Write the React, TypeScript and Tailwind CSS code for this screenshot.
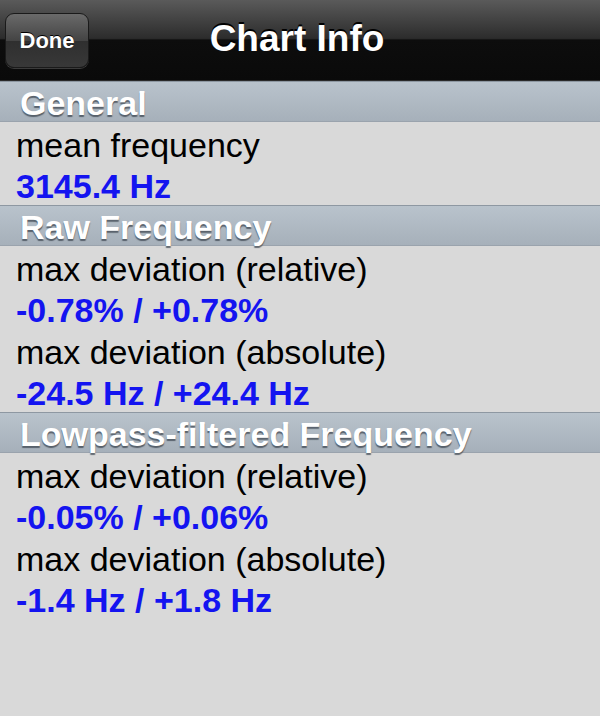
import React from 'react';

type Item = { label: string; value: string };
type Section = { title: string; items: Item[] };

const sections: Section[] = [
  { title: 'General', items: [{ label: 'mean frequency', value: '3145.4 Hz' }] },
  {
    title: 'Raw Frequency',
    items: [
      { label: 'max deviation (relative)', value: '-0.78% / +0.78%' },
      { label: 'max deviation (absolute)', value: '-24.5 Hz / +24.4 Hz' },
    ],
  },
  {
    title: 'Lowpass-filtered Frequency',
    items: [
      { label: 'max deviation (relative)', value: '-0.05% / +0.06%' },
      { label: 'max deviation (absolute)', value: '-1.4 Hz / +1.8 Hz' },
    ],
  },
];

export default function App() {
  return (
    <div className="w-[600px] h-[716px] bg-[#d9d9d9] overflow-hidden font-['Liberation_Sans',Arial,sans-serif]">
      {/* Navigation bar */}
      <div className="relative h-[81px] flex items-center justify-center border-b border-[#2a2a2a] bg-[linear-gradient(to_bottom,#5a5a5a_0%,#2c2c2c_48%,#0d0d0d_50%,#0a0a0a_100%)]">
        <button className="absolute left-[5px] top-[13px] w-[84px] h-[55px] rounded-[9px] border border-[#1a1a1a] bg-[linear-gradient(to_bottom,#6a6a6a_0%,#444_50%,#2f2f2f_51%,#383838_100%)] shadow-[0_1px_0_rgba(255,255,255,0.2)] text-white font-bold text-[22px] [text-shadow:0_-1px_0_#000]">
          Done
        </button>
        <h1 className="text-white font-bold text-[37px] [text-shadow:0_-2px_0_#000] -mt-[2px] ml-[-6px]">Chart Info</h1>
      </div>

      {sections.map((s) => (
        <div key={s.title}>
          <div className="h-[41px] flex items-center pt-[2px] px-[20px] border-t border-[#8e98a2] border-b border-b-[#9aa3ad] bg-[linear-gradient(to_bottom,#b9c3cc,#a6b0ba)]">
            <span className="text-white font-bold text-[34px] leading-none [text-shadow:0_2px_1px_rgba(60,70,80,0.75)]">{s.title}</span>
          </div>
          <div className="px-[16px]">
            {s.items.map((it) => (
              <div key={it.label}>
                <div className="h-[41.5px] flex items-center pt-[4px] text-black text-[34px] leading-none">{it.label}</div>
                <div className="h-[41.5px] flex items-center pt-[4px] text-[#1414f0] font-bold text-[34px] leading-none">{it.value}</div>
              </div>
            ))}
          </div>
        </div>
      ))}
    </div>
  );
}
